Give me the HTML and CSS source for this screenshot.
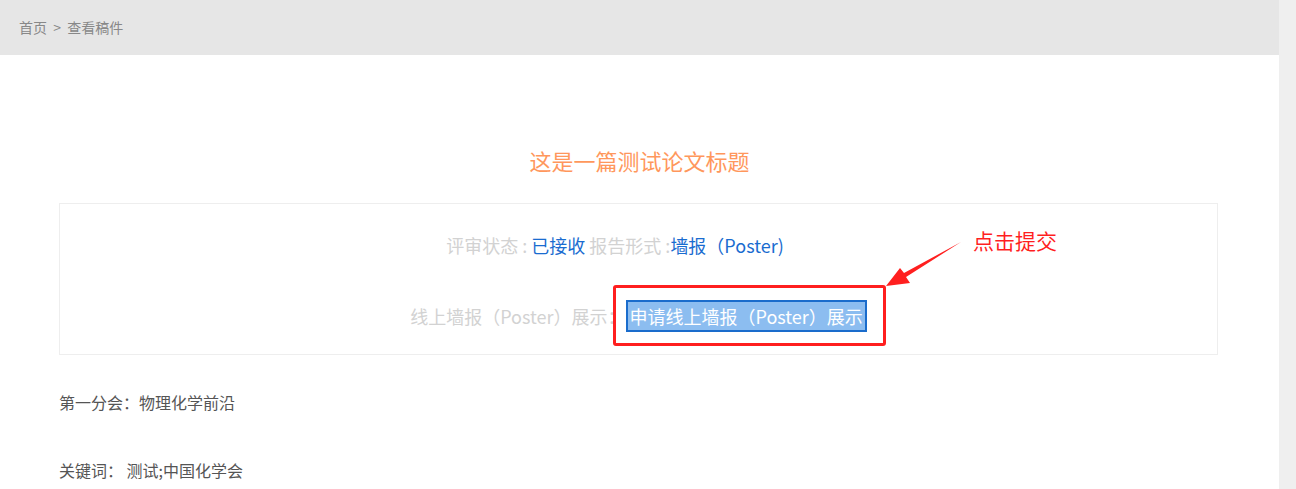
FILE: index.html
```html
<!DOCTYPE html>
<html>

<head>
  <meta charset="UTF-8">
  <link rel="stylesheet" href="styles.css">
</head>

<body>
  <div class="page">
    <div class="main">
      <div class="crumbs">首页 &nbsp;&gt;&nbsp; 查看稿件</div>

      <h1 class="title">这是一篇测试论文标题</h1>

      <div class="info-box">
        <div class="info-row first">
          <span class="label">评审状态 : </span><span class="value">已接收 </span><span class="label">报告形式 :</span><span class="value">墙报（Poster)</span>
        </div>
        <div class="info-row">
          <span class="label">线上墙报（Poster）展示：</span><button class="apply-btn">申请线上墙报（Poster）展示</button>
        </div>
        <div class="mark-box"></div>
      </div>

      <div class="meta">第一分会：物理化学前沿</div>
      <div class="meta keywords">关键词： 测试;中国化学会</div>

      <!-- annotation -->
      <div class="note">点击提交</div>
      <svg class="note-arrow" width="90" height="70" viewBox="0 0 90 70">
        <polygon points="6,61 20,43 24,48 81,17 26,52 30,58" fill="#ff1f1f" />
      </svg>
    </div>
    <div class="scroll-strip"></div>
  </div>
</body>

</html>
```

FILE: styles.css
```css
* {
  margin: 0;
  padding: 0;
  box-sizing: border-box;
}

body {
  font-family: "Noto Sans CJK SC", "Noto Sans", sans-serif;
  background: #fff;
  color: #555;
}

.page {
  display: flex;
  height: 489px;
  overflow: hidden;
}

.main {
  position: relative;
  flex: 1;
  background: #fff;
}

.scroll-strip {
  width: 17px;
  background: #efefef;
}

.crumbs {
  height: 55px;
  line-height: 55px;
  padding-left: 19px;
  background: #e6e6e6;
  font-size: 14px;
  color: #888;
}

.title {
  margin-top: 91px;
  text-align: center;
  font-size: 22px;
  line-height: 28px;
  font-weight: normal;
  color: #ff975c;
}

.info-box {
  position: relative;
  margin: 29px 61px 0 59px;
  padding: 26px 0 22px;
  border: 1px solid #eee;
}

.info-row {
  display: flex;
  justify-content: center;
  align-items: center;
  height: 32px;
  font-size: 18px;
  white-space: pre;
}

.info-row.first {
  height: 30px;
  margin-bottom: 40px;
  padding-right: 47px;
}

.label {
  color: #d2d2d2;
}

.value {
  color: #1a6cd0;
}

.apply-btn {
  height: 32px;
  padding: 0 2px;
  border: 2px solid #1a6ccc;
  background: #8cbdf0;
  color: #fff;
  font-family: inherit;
  font-size: 18px;
  line-height: 28px;
}

.mark-box {
  position: absolute;
  left: 553px;
  top: 81px;
  width: 273px;
  height: 61px;
  border: 3px solid #ff1f1f;
  border-radius: 3px;
}

.meta {
  margin: 35px 0 0 59px;
  font-size: 16px;
  line-height: 24px;
  color: #555;
}

.meta.keywords {
  margin-top: 44px;
}

.note {
  position: absolute;
  left: 973px;
  top: 226px;
  font-size: 21px;
  line-height: 28px;
  color: #ff1f1f;
}

.note-arrow {
  position: absolute;
  left: 880px;
  top: 225px;
}
```
